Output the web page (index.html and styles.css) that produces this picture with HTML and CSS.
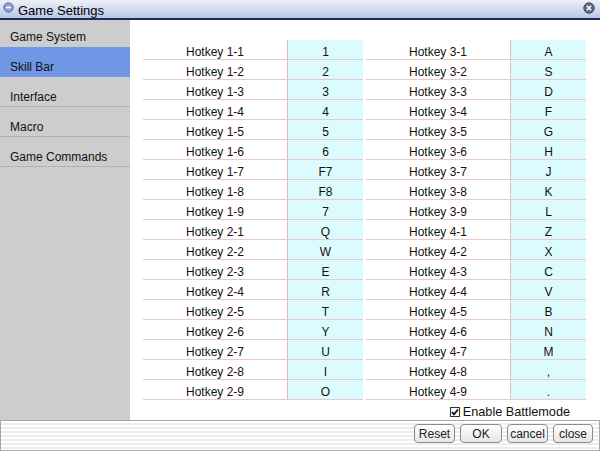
FILE: index.html
```html
<!DOCTYPE html>
<html>
<head>
<meta charset="utf-8">
<title>Game Settings</title>
<link rel="stylesheet" href="styles.css">
</head>
<body>
<div class="window">
  <div class="titlebar">
    <svg class="ticon" width="11" height="11" viewBox="0 0 11 11"><circle cx="5.5" cy="5.5" r="4.6" fill="#8fa3cf" stroke="#4a5b8c" stroke-width="1"/><path d="M3 5.5h5" stroke="#fff" stroke-width="1.6"/></svg>
    <span class="ttext">Game Settings</span>
    <svg class="tclose" width="12" height="12" viewBox="0 0 12 12"><circle cx="6" cy="6" r="5.2" fill="#5f6a86" stroke="#3b4460" stroke-width="1"/><path d="M3.8 3.8l4.4 4.4M8.2 3.8l-4.4 4.4" stroke="#fff" stroke-width="1.5"/></svg>
  </div>
  <div class="content">
    <div class="sidebar">
      <div class="item first">Game System</div>
      <div class="item selected">Skill Bar</div>
      <div class="item">Interface</div>
      <div class="item">Macro</div>
      <div class="item">Game Commands</div>
    </div>
    <div class="main">
      <div class="tables">
        <div class="table">
          <div class="row"><div class="lbl">Hotkey 1-1</div><div class="val">1</div></div>
          <div class="row"><div class="lbl">Hotkey 1-2</div><div class="val">2</div></div>
          <div class="row"><div class="lbl">Hotkey 1-3</div><div class="val">3</div></div>
          <div class="row"><div class="lbl">Hotkey 1-4</div><div class="val">4</div></div>
          <div class="row"><div class="lbl">Hotkey 1-5</div><div class="val">5</div></div>
          <div class="row"><div class="lbl">Hotkey 1-6</div><div class="val">6</div></div>
          <div class="row"><div class="lbl">Hotkey 1-7</div><div class="val">F7</div></div>
          <div class="row"><div class="lbl">Hotkey 1-8</div><div class="val">F8</div></div>
          <div class="row"><div class="lbl">Hotkey 1-9</div><div class="val">7</div></div>
          <div class="row"><div class="lbl">Hotkey 2-1</div><div class="val">Q</div></div>
          <div class="row"><div class="lbl">Hotkey 2-2</div><div class="val">W</div></div>
          <div class="row"><div class="lbl">Hotkey 2-3</div><div class="val">E</div></div>
          <div class="row"><div class="lbl">Hotkey 2-4</div><div class="val">R</div></div>
          <div class="row"><div class="lbl">Hotkey 2-5</div><div class="val">T</div></div>
          <div class="row"><div class="lbl">Hotkey 2-6</div><div class="val">Y</div></div>
          <div class="row"><div class="lbl">Hotkey 2-7</div><div class="val">U</div></div>
          <div class="row"><div class="lbl">Hotkey 2-8</div><div class="val">I</div></div>
          <div class="row"><div class="lbl">Hotkey 2-9</div><div class="val">O</div></div>
        </div>
        <div class="table">
          <div class="row"><div class="lbl">Hotkey 3-1</div><div class="val">A</div></div>
          <div class="row"><div class="lbl">Hotkey 3-2</div><div class="val">S</div></div>
          <div class="row"><div class="lbl">Hotkey 3-3</div><div class="val">D</div></div>
          <div class="row"><div class="lbl">Hotkey 3-4</div><div class="val">F</div></div>
          <div class="row"><div class="lbl">Hotkey 3-5</div><div class="val">G</div></div>
          <div class="row"><div class="lbl">Hotkey 3-6</div><div class="val">H</div></div>
          <div class="row"><div class="lbl">Hotkey 3-7</div><div class="val">J</div></div>
          <div class="row"><div class="lbl">Hotkey 3-8</div><div class="val">K</div></div>
          <div class="row"><div class="lbl">Hotkey 3-9</div><div class="val">L</div></div>
          <div class="row"><div class="lbl">Hotkey 4-1</div><div class="val">Z</div></div>
          <div class="row"><div class="lbl">Hotkey 4-2</div><div class="val">X</div></div>
          <div class="row"><div class="lbl">Hotkey 4-3</div><div class="val">C</div></div>
          <div class="row"><div class="lbl">Hotkey 4-4</div><div class="val">V</div></div>
          <div class="row"><div class="lbl">Hotkey 4-5</div><div class="val">B</div></div>
          <div class="row"><div class="lbl">Hotkey 4-6</div><div class="val">N</div></div>
          <div class="row"><div class="lbl">Hotkey 4-7</div><div class="val">M</div></div>
          <div class="row"><div class="lbl">Hotkey 4-8</div><div class="val">,</div></div>
          <div class="row"><div class="lbl">Hotkey 4-9</div><div class="val">.</div></div>
        </div>
      </div>
      <div class="check">
        <svg class="cbox" width="10" height="10" viewBox="0 0 10 10"><rect x="0.5" y="0.5" width="9" height="9" fill="#fff" stroke="#333"/><path d="M2 5l2 2.3L8 2.5" fill="none" stroke="#111" stroke-width="1.8"/></svg>
        <span>Enable Battlemode</span>
      </div>
    </div>
  </div>
  <div class="bottombar">
    <button class="btn reset">Reset</button>
    <button class="btn ok">OK</button>
    <button class="btn cancel">cancel</button>
    <button class="btn close">close</button>
  </div>
</div>
</body>
</html>
```
FILE: styles.css
```css
* { box-sizing: border-box; }
html, body { margin: 0; padding: 0; }
body {
  width: 600px;
  height: 451px;
  overflow: hidden;
  font-family: "Liberation Sans", Arial, sans-serif;
  font-size: 12px;
  color: #111;
  background: #fff;
}
.window {
  display: flex;
  flex-direction: column;
  height: 451px;
}
.titlebar {
  height: 20px;
  flex: none;
  display: flex;
  align-items: center;
  padding: 0 5px 0 3px;
  background: linear-gradient(#eef1f8 0%, #d4dcef 50%, #b7c6e8 100%);
  border-bottom: 2px solid #202c5c;
}
.ticon { margin-right: 4px; margin-top: -3px; }
.ttext { font-size: 13px; color: #000; flex: 1; margin-top: 3px; }
.tclose { margin-top: -2px; }
.content {
  display: flex;
  height: 400px;
  flex: none;
}
.sidebar {
  width: 130px;
  background: #cdcdcd;
  display: flex;
  flex-direction: column;
}
.item {
  height: 30px;
  padding: 13px 0 0 10px;
  line-height: 14px;
  border-bottom: 1px solid #b2b2b2;
  color: #111;
}
.item.first { height: 27px; padding-top: 10px; border-bottom: none; }
.item.selected { background: #7096e6; border-bottom: none; }
.main {
  flex: 1;
  display: flex;
  flex-direction: column;
  padding: 20px 0 0 13px;
}
.tables {
  display: flex;
  gap: 3px;
}
.table { width: 220px; }
.row {
  display: flex;
  height: 20px;
  border-bottom: 1px solid #e8c8c8;
}
.lbl {
  width: 144px;
  text-align: center;
  padding-top: 5px;
  line-height: 14px;
}
.val {
  flex: 1;
  text-align: center;
  padding-top: 5px;
  line-height: 14px;
  background: #dcfbfe;
  border-left: 1px solid #e0bcbc;
}
.check {
  display: flex;
  align-items: center;
  justify-content: flex-end;
  padding-right: 30px;
  margin-top: 5px;
  font-size: 12.7px;
}
.cbox { margin-right: 3px; }
.bottombar {
  height: 31px;
  flex: none;
  display: flex;
  justify-content: flex-end;
  align-items: flex-start;
  gap: 5px;
  padding: 3px 6px 0 0;
  border: 1px solid #a8a8a8;
  background: repeating-linear-gradient(#ffffff 0 2px, #ececec 2px 4px);
}
.btn {
  font-family: "Liberation Sans", Arial, sans-serif;
  font-size: 12px;
  color: #222;
  height: 19px;
  padding: 0;
  border: 1px solid #8c8c8c;
  border-radius: 4px;
  background: linear-gradient(#ffffff, #e6e6e6);
  line-height: 16px;
  text-align: center;
}
.btn.reset { width: 41px; }
.btn.ok { width: 42px; }
.btn.cancel { width: 41px; }
.btn.close { width: 40px; }
```
